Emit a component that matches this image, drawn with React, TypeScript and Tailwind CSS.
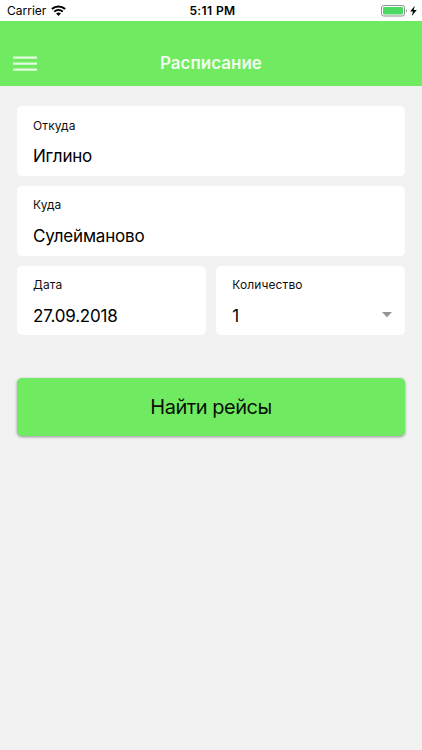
import React from 'react';

interface FieldProps {
  label: string;
  value: string;
  select?: boolean;
}

function StatusBar() {
  return (
    <div className="grid grid-cols-3 items-center h-[21px] bg-white pl-[7px] pr-[4px] text-black">
      <div className="flex items-center gap-[5px]">
        <span className="text-[12px] leading-[14px]">Carrier</span>
        <svg width="15" height="11" viewBox="0 0 15 11" fill="none">
          <path d="M0.9 4.1C4.6 0.6 10.4 0.6 14.1 4.1" stroke="black" strokeWidth="2.1" />
          <path d="M3.2 6.6C5.7 4.4 9.3 4.4 11.8 6.6" stroke="black" strokeWidth="1.9" />
          <path d="M5.1 8.5C6.5 7.3 8.5 7.3 9.9 8.5L7.5 10.9Z" fill="black" />
        </svg>
      </div>
      <span className="text-center text-[12px] leading-[14px] font-semibold tracking-[0.4px]">5:11 PM</span>
      <div className="flex items-center justify-end">
        <svg width="37" height="12" viewBox="0 0 37 12">
          <rect x="0.5" y="0.5" width="23" height="10.5" rx="2.2" fill="white" stroke="#8e8e8e" />
          <rect x="2" y="2" width="20" height="7.5" rx="1" fill="#4cd964" />
          <path d="M25 4C26.3 4.5 26.3 7 25 7.5Z" fill="#8e8e8e" />
          <path d="M33.8 0.8L29.2 6.6H32L30.7 11L35.8 5H32.7Z" fill="black" />
        </svg>
      </div>
    </div>
  );
}

function Header() {
  return (
    <header className="flex items-end h-[65px] bg-[#70ea61] px-[13px] pb-[10px]">
      <button className="flex w-6 h-[25px] items-center" aria-label="Меню">
        <svg width="24" height="16" viewBox="0 0 24 16" fill="#e4fbe0">
          <rect y="0.5" width="24" height="2.3" rx="0.5" />
          <rect y="6.5" width="24" height="2.3" rx="0.5" />
          <rect y="12.5" width="24" height="2.3" rx="0.5" />
        </svg>
      </button>
      <h1 className="flex-1 pr-6 text-center text-[17px] leading-[25px] font-semibold text-[#f0fdee]">Расписание</h1>
    </header>
  );
}

function Field({ label, value, select }: FieldProps) {
  return (
    <div className="flex flex-1 h-[69.8px] rounded-[5px] bg-white pl-[16.3px] pr-[13px]">
      <div className="flex-1">
        <div className="pt-[11.7px] text-[12px] leading-4 tracking-[0.1px] text-[#111]">{label}</div>
        <div className="pt-[10.5px] text-[17px] leading-6 tracking-[-0.2px] text-black">{value}</div>
      </div>
      {select && (
        <svg className="mt-[46px]" width="10" height="6" viewBox="0 0 10 6">
          <path d="M0 0H10L5 5.2Z" fill="#949494" />
        </svg>
      )}
    </div>
  );
}

export default function App() {
  return (
    <div className="min-h-screen bg-[#f2f2f2] font-['Inter','Liberation_Sans',sans-serif]">
      <StatusBar />
      <Header />

      <main className="px-[16.7px] pt-5">
        <div className="flex flex-col gap-[10px]">
          <div className="flex">
            <Field label="Откуда" value="Иглино" />
          </div>
          <div className="flex">
            <Field label="Куда" value="Сулейманово" />
          </div>
          <div className="flex gap-[10px]">
            <Field label="Дата" value="27.09.2018" />
            <Field label="Количество" value="1" select />
          </div>
        </div>

        <button className="mt-[42.6px] w-full h-[58px] rounded-[5px] bg-[#70ea61] text-[20px] tracking-[-0.5px] text-[#071006] shadow-[0_1px_3px_rgba(0,0,0,0.4)]">
          Найти рейсы
        </button>
      </main>
    </div>
  );
}
